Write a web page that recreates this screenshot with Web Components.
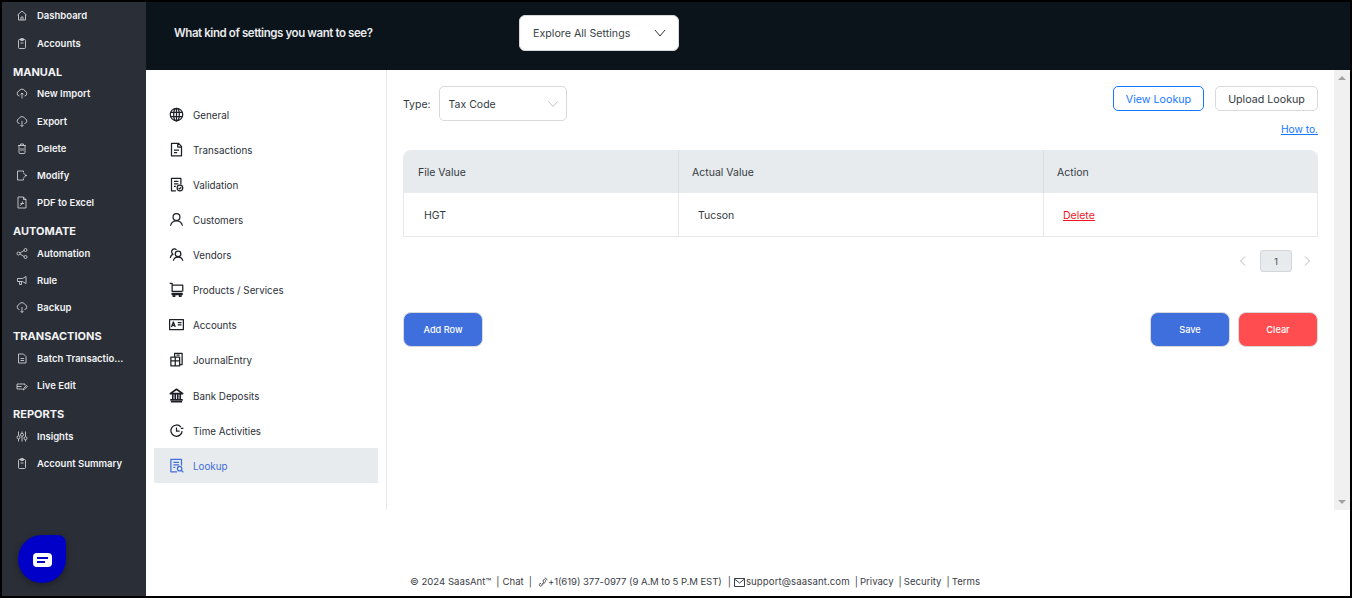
<!DOCTYPE html>
<html lang="en">
<head>
<meta charset="utf-8">
<title>Settings - Lookup</title>
<style>
html, body { margin: 0; padding: 0; background: #fff; }
body { font-family: Inter, "Liberation Sans", sans-serif; overflow: hidden; }
</style>
</head>
<body>
<app-shell>
	<app-sidebar slot="sidebar">
		<side-item icon="home">Dashboard</side-item>
		<side-item icon="clipboard" style="--top:1px">Accounts</side-item>
		<side-head>MANUAL</side-head>
		<side-item icon="upcloud">New Import</side-item>
		<side-item icon="downcloud" style="--top:1px">Export</side-item>
		<side-item icon="trash">Delete</side-item>
		<side-item icon="modify">Modify</side-item>
		<side-item icon="pdf">PDF to Excel</side-item>
		<side-head>AUTOMATE</side-head>
		<side-item icon="share" style="--top:1px">Automation</side-item>
		<side-item icon="megaphone">Rule</side-item>
		<side-item icon="downcloud">Backup</side-item>
		<side-head>TRANSACTIONS</side-head>
		<side-item icon="doc" style="--top:1px">Batch Transactio...</side-item>
		<side-item icon="liveedit">Live Edit</side-item>
		<side-head>REPORTS</side-head>
		<side-item icon="sliders" style="--top:1px">Insights</side-item>
		<side-item icon="clipboard">Account Summary</side-item>
	</app-sidebar>
	<settings-bar slot="top"></settings-bar>
	<settings-nav slot="nav">
		<nav-item icon="globe">General</nav-item>
		<nav-item icon="file">Transactions</nav-item>
		<nav-item icon="validation">Validation</nav-item>
		<nav-item icon="person">Customers</nav-item>
		<nav-item icon="people">Vendors</nav-item>
		<nav-item icon="cart">Products / Services</nav-item>
		<nav-item icon="idcard">Accounts</nav-item>
		<nav-item icon="journal">JournalEntry</nav-item>
		<nav-item icon="bank" style="--top:1px">Bank Deposits</nav-item>
		<nav-item icon="clock">Time Activities</nav-item>
		<nav-item icon="lookup" active>Lookup</nav-item>
	</settings-nav>
	<lookup-panel slot="content"></lookup-panel>
	<fake-scrollbar slot="scroll"></fake-scrollbar>
	<app-footer slot="footer"></app-footer>
	<chat-bubble slot="chat"></chat-bubble>
</app-shell>

<script>
const html = String.raw;
const css = String.raw;

// icon paths, all drawn on a 24 box
const ICONS = {
	home: `<path d="M3 11 12 3l9 8M5 10v11h14V10M10 21v-6h4v6"/>`,
	clipboard: `<rect x="5" y="4" width="14" height="18" rx="2"/><rect x="9" y="2" width="6" height="4" rx="1"/><path d="M9 11h6"/>`,
	upcloud: `<path d="M7 17a5 5 0 0 1-1-9.8 6.5 6.5 0 0 1 12 0A5 5 0 0 1 17 17"/><path d="M12 22V11M9 14l3-3 3 3"/>`,
	downcloud: `<path d="M7 16a5 5 0 0 1-1-9.8 6.5 6.5 0 0 1 12 0A5 5 0 0 1 17 16"/><path d="M12 11v11M9 19l3 3 3-3"/>`,
	trash: `<path d="M6 6v14a2 2 0 0 0 2 2h8a2 2 0 0 0 2-2V6M4 6h16M9 6V3h6v3M10 11v6M14 11v6"/>`,
	modify: `<path d="M15 6V3H3v18h12v-3M15 7l5 5-5 5"/><path d="M18 12h4"/>`,
	pdf: `<path d="M4 1h11l5 5v17H4zM15 1v5h5"/><path d="M8 18c3-1 5-4 5-8M9 14h7"/>`,
	share: `<circle cx="5" cy="12" r="3"/><circle cx="19" cy="5" r="3"/><circle cx="19" cy="19" r="3"/><path d="M8 11l8-5M8 13l8 5"/>`,
	megaphone: `<path d="M3 8h10l7-4v14l-7-4H3zM7 14v6h4v-6"/>`,
	doc: `<path d="M5 3h10l5 5v13H5zM9 12h7M9 16h7"/>`,
	liveedit: `<path d="M2 9h16v3M2 9v10h11M2 14h9M16 20l-2 1 1-3 6-6 2 2z"/>`,
	sliders: `<path d="M5 2v8M5 17v5M12 2v3M12 12v10M19 2v10M19 19v3"/><circle cx="5" cy="13.5" r="3"/><circle cx="12" cy="8.5" r="3"/><circle cx="19" cy="15.5" r="3"/>`,
	globe: `<circle cx="12" cy="12" r="10"/><ellipse cx="12" cy="12" rx="4.5" ry="10"/><path d="M12 2v20M2.5 8.5h19M2.5 15.5h19"/>`,
	file: `<path d="M4 2h11l5 5v15H4zM14 2v6h6M8 13h8M8 17h5"/>`,
	validation: `<path d="M11 22H4V2h15v10M8 7h7M8 11h7M8 15h3"/><circle cx="17.5" cy="17.5" r="4.5"/><path d="m15.5 17.5 1.5 1.5 2.5-2.5"/>`,
	person: `<circle cx="12" cy="8" r="5.5"/><path d="M2.5 22c1-5 4.500-8 9.500-8s8.500 3 9.500 8"/>`,
	people: `<circle cx="14.500" cy="11" r="4.500"/><path d="M7 22c.5-3.500 3.500-6 7.500-6s7 2.500 7.500 6M12 4.500A4.500 4.500 0 1 0 6.500 11.500C4 12.500 2.500 14.500 2 17.500"/>`,
	cart: `<path d="M1 2h4v13h16M5 5h17v10"/><path d="M5 18h16v2H5z"/><circle cx="8" cy="22" r="1.500"/><circle cx="18" cy="22" r="1.500"/>`,
	idcard: `<rect x="1" y="4" width="22" height="16"/><path d="M4 16l3-8 3 8M5 13.500h4M14 9h6M14 12.500h6"/>`,
	journal: `<path d="M9 8V2h12v18h-4M3 8h14v14H3zM3 14h14M12 5h5M10 8v14"/>`,
	bank: `<path d="M2 9 12 2l10 7zM3 22h18M2 19h20M6 10v8M10 10v8M14 10v8M18 10v8" stroke-width="2.600"/>`,
	clock: `<path d="M19 6.500A9 9 0 1 0 21 13M12 7v6h5M19 8.500h4"/>`,
	lookup: `<path d="M13 22H3V2h17v10M7 7h9M7 11h9M7 15h3"/><circle cx="17" cy="17" r="3.500"/><path d="m20 20 3 3"/>`,
};

function icon(name, size, stroke = 1.8) {
	return `<svg width="${size}" height="${size}" viewBox="0 0 24 24" fill="none" stroke="currentColor" stroke-width="${stroke}" stroke-linejoin="round">${ICONS[name] || ""}</svg>`;
}

class AppShell extends HTMLElement {
	constructor() {
		super();
		this.attachShadow({ mode: "open" });
		this.shadowRoot.innerHTML = html`
			<style>${css`
				:host {
					display: grid;
					position: relative;
					box-sizing: border-box;
					width: 1352px;
					height: 598px;
					border: 2px solid #000;
					grid-template-columns: 144px 240px 1px 947px 16px;
					grid-template-rows: 68px 440px 86px;
					background: #fff;
				}
				.side { grid-column: 1; grid-row: 1 / 4; display: grid; min-height: 0; }
				.top { grid-column: 2 / 6; grid-row: 1; display: grid; }
				.nav { grid-column: 2; grid-row: 2; display: grid; }
				.rule { grid-column: 3; grid-row: 2; background: #e6e8ea; }
				.content { grid-column: 4; grid-row: 2; display: grid; }
				.scroll { grid-column: 5; grid-row: 2; display: grid; }
				.foot { grid-column: 2 / 6; grid-row: 3; display: grid; }
			`}</style>
			<div class="side"><slot name="sidebar"></slot></div>
			<div class="top"><slot name="top"></slot></div>
			<div class="nav"><slot name="nav"></slot></div>
			<div class="rule"></div>
			<div class="content"><slot name="content"></slot></div>
			<div class="scroll"><slot name="scroll"></slot></div>
			<div class="foot"><slot name="footer"></slot></div>
			<slot name="chat"></slot>
		`;
	}
}

class AppSidebar extends HTMLElement {
	constructor() {
		super();
		this.attachShadow({ mode: "open" });
		this.shadowRoot.innerHTML = html`
			<style>${css`
				:host {
					display: flex;
					flex-direction: column;
					background: #2a2e37;
					color: #f2f3f5;
					overflow: hidden;
				}
			`}</style>
			<slot></slot>
		`;
	}
}

class SideItem extends HTMLElement {
	constructor() {
		super();
		this.attachShadow({ mode: "open" });
		this.shadowRoot.innerHTML = html`
			<style>${css`
				:host {
					display: flex;
					align-items: center;
					height: 27px;
					margin-top: var(--top, 0);
					padding-left: 14px;
					gap: 9px;
					font: 600 9.500px Inter, "Liberation Sans", sans-serif;
					white-space: nowrap;
					flex: none;
				}
				.ic { display: flex; width: 12px; justify-content: center; color: #d5d7da; margin-top: -1px; }
			`}</style>
			<span class="ic">${icon(this.getAttribute("icon"), 13, 1.7)}</span>
			<span><slot></slot></span>
		`;
	}
}

class SideHead extends HTMLElement {
	constructor() {
		super();
		this.attachShadow({ mode: "open" });
		this.shadowRoot.innerHTML = html`
			<style>${css`
				:host {
					display: flex;
					align-items: center;
					height: 16px;
					margin-top: 7px;
					padding-left: 11px;
					font: 700 11px Inter, "Liberation Sans", sans-serif;
					flex: none;
				}
			`}</style>
			<slot></slot>
		`;
	}
}

class SettingsBar extends HTMLElement {
	constructor() {
		super();
		this.attachShadow({ mode: "open" });
		this.shadowRoot.innerHTML = html`
			<style>${css`
				:host {
					display: flex;
					align-items: center;
					background: #0b141b;
					padding-left: 28px;
					padding-bottom: 6px;
					font-family: Inter, "Liberation Sans", sans-serif;
				}
				.q { width: 345px; flex: none; color: #e8eaec; font-size: 11.500px; font-weight: 600; letter-spacing: -0.42px; white-space: nowrap; }
				.pick {
					display: flex;
					align-items: center;
					justify-content: space-between;
					box-sizing: border-box;
					width: 160px;
					height: 36px;
					padding: 0 12px 0 13px;
					background: #fff;
					border: 1px solid #d9d9d9;
					border-radius: 6px;
					font-size: 10.700px;
					color: #3a3f45;
				}
				svg { display: block; }
			`}</style>
			<div class="q">What kind of settings you want to see?</div>
			<div class="pick">
				<span>Explore All Settings</span>
				<svg width="12" height="8" viewBox="0 0 12 8" fill="none" stroke="#333" stroke-width="1"><path d="M1 1l5 6 5-6"/></svg>
			</div>
		`;
	}
}

class SettingsNav extends HTMLElement {
	constructor() {
		super();
		this.attachShadow({ mode: "open" });
		this.shadowRoot.innerHTML = html`
			<style>${css`
				:host {
					display: flex;
					flex-direction: column;
					padding: 27px 8px 0;
					background: #fff;
				}
			`}</style>
			<slot></slot>
		`;
	}
}

class NavItem extends HTMLElement {
	constructor() {
		super();
		this.attachShadow({ mode: "open" });
		this.shadowRoot.innerHTML = html`
			<style>${css`
				:host {
					display: flex;
					align-items: center;
					height: 35px;
					margin-top: var(--top, 0);
					padding-left: 15px;
					gap: 9px;
					font: 400 9.800px Inter, "Liberation Sans", sans-serif;
					color: #2b3038;
					flex: none;
				}
				:host([active]) { background: #e8ebee; color: #3f6fd8; }
				span { padding-top: 2px; }
				svg { display: block; color: #1c2026; }
				:host([active]) svg { color: #3f6fd8; }
			`}</style>
			${icon(this.getAttribute("icon"), 15, 2)}
			<span><slot></slot></span>
		`;
	}
}

class AppButton extends HTMLElement {
	constructor() {
		super();
		this.attachShadow({ mode: "open" });
		this.shadowRoot.innerHTML = html`
			<style>${css`
				:host {
					display: inline-flex;
					align-items: center;
					justify-content: center;
					box-sizing: border-box;
					width: 80px;
					height: 35px;
					border: 1px solid #d9d9d9;
					border-radius: 8px;
					font: 500 9.200px Inter, "Liberation Sans", sans-serif;
					color: #fff;
				}
				:host([kind="primary"]) { background: #3e6fdd; }
				:host([kind="danger"]) { background: #ff4d50; }
				:host([kind="outline"]), :host([kind="plain"]) {
					height: 25px;
					padding-top: 2px;
					border-radius: 5px;
					background: #fff;
					font-weight: 400;
					font-size: 10.700px;
				}
				:host([kind="outline"]) { width: 91px; border-color: #1677ff; color: #1677ff; }
				:host([kind="plain"]) { width: 103px; color: #333a42; }
			`}</style>
			<slot></slot>
		`;
	}
}

class LookupTable extends HTMLElement {
	constructor() {
		super();
		this.attachShadow({ mode: "open" });
		this.shadowRoot.innerHTML = html`
			<style>${css`
				:host {
					display: grid;
					grid-template-columns: 274px 365px 1fr;
					grid-template-rows: 43px 43px;
					box-sizing: border-box;
					border-left: 1px solid #e6e8ea;
					border-right: 1px solid #e6e8ea;
					border-bottom: 1px solid #e6e8ea;
					border-radius: 8px 8px 0 0;
					overflow: hidden;
					font: 400 10.500px Inter, "Liberation Sans", sans-serif;
					color: #333a42;
				}
				div { display: flex; align-items: center; padding-top: 2px; box-sizing: border-box; }
				.h { background: #e8ebee; padding-left: 13px; border-left: 1px solid #dcdee1; }
				.c { padding-left: 19px; border-left: 1px solid #e6e8ea; }
				.h.first { border-left: 0; padding-left: 14px; }
				.c.first { border-left: 0; padding-left: 20px; }
				.del { color: #f5141e; text-decoration: underline; }
			`}</style>
			<div class="h first">File Value</div>
			<div class="h">Actual Value</div>
			<div class="h">Action</div>
			<div class="c first">HGT</div>
			<div class="c">Tucson</div>
			<div class="c"><span class="del">Delete</span></div>
		`;
	}
}

class LookupPanel extends HTMLElement {
	constructor() {
		super();
		this.attachShadow({ mode: "open" });
		this.shadowRoot.innerHTML = html`
			<style>${css`
				:host {
					display: flex;
					flex-direction: column;
					padding: 16px 16px 0;
					font: 400 10.500px Inter, "Liberation Sans", sans-serif;
					color: #333a42;
				}
				.row { display: flex; align-items: center; justify-content: space-between; }
				.type { display: flex; align-items: center; gap: 8px; padding-top: 1px; }
				.select {
					display: flex;
					align-items: center;
					justify-content: space-between;
					box-sizing: border-box;
					width: 128px;
					height: 35px;
					margin-top: -1px;
					padding: 1px 8px 0 9px;
					border: 1px solid #d9d9d9;
					border-radius: 5px;
				}
				.btns { display: flex; gap: 11px; align-self: flex-start; }
				.how { align-self: flex-end; margin-top: 2px; color: #1677ff; text-decoration: underline; font-size: 10.200px; line-height: 12px; }
				lookup-table { margin-top: 15px; }
				.pager { display: flex; align-items: center; justify-content: flex-end; margin-top: 13px; padding-right: 7px; color: #b5b8bc; }
				.page { display: flex; align-items: center; justify-content: center; width: 32px; height: 22px; margin: 0 11px 0 13px; box-sizing: border-box; background: #e8ebee; border: 1px solid #d4d6d9; border-radius: 3px; color: #444; font-size: 9px; }
				.actions { display: flex; justify-content: space-between; margin-top: 40px; }
				.right { display: flex; gap: 8px; }
				svg { display: block; }
			`}</style>
			<div class="row">
				<div class="type">
					<span>Type:</span>
					<div class="select">
						<span>Tax Code</span>
						<svg width="10" height="6" viewBox="0 0 10 6" fill="none" stroke="#bfc2c6"><path d="M.5.5 5 5.500 9.500.5"/></svg>
					</div>
				</div>
				<div class="btns">
					<app-button kind="outline">View Lookup</app-button>
					<app-button kind="plain">Upload Lookup</app-button>
				</div>
			</div>
			<span class="how">How to.</span>
			<lookup-table></lookup-table>
			<div class="pager">
				<svg width="8" height="10" viewBox="0 0 8 10" fill="none" stroke="currentColor"><path d="M6 .5 1.500 5 6 9.500"/></svg>
				<span class="page">1</span>
				<svg width="8" height="10" viewBox="0 0 8 10" fill="none" stroke="currentColor"><path d="M2 .5 6.500 5 2 9.500"/></svg>
			</div>
			<div class="actions">
				<app-button kind="primary">Add Row</app-button>
				<div class="right">
					<app-button kind="primary">Save</app-button>
					<app-button kind="danger">Clear</app-button>
				</div>
			</div>
		`;
	}
}

class FakeScrollbar extends HTMLElement {
	constructor() {
		super();
		this.attachShadow({ mode: "open" });
		this.shadowRoot.innerHTML = html`
			<style>${css`
				:host {
					display: flex;
					flex-direction: column;
					justify-content: space-between;
					align-items: center;
					padding: 6px 0;
					background: #f0f0f0;
				}
				svg { display: block; }
			`}</style>
			<svg width="8" height="4" viewBox="0 0 8 4"><path d="M4 0 8 4H0z" fill="#a3a3a3"/></svg>
			<svg width="8" height="4" viewBox="0 0 8 4"><path d="M0 0h8L4 4z" fill="#a3a3a3"/></svg>
		`;
	}
}

class AppFooter extends HTMLElement {
	constructor() {
		super();
		this.attachShadow({ mode: "open" });
		this.shadowRoot.innerHTML = html`
			<style>${css`
				:host {
					display: flex;
					align-items: flex-end;
					padding: 0 0 8px 264px;
					font: 400 9.600px Inter, "Liberation Sans", sans-serif;
					line-height: 12px;
					color: #3b4047;
					white-space: nowrap;
				}
				svg { display: block; flex: none; margin-bottom: 1px; }
			`}</style>
			<span>© 2024 SaasAnt™</span>
			<span style="margin-left:5px">|</span>
			<span style="margin-left:3px">Chat</span>
			<span style="margin-left:5px">|</span>
			<svg style="margin-left:6px" width="10" height="10" viewBox="0 0 24 24" fill="none" stroke="currentColor" stroke-width="2"><path d="M5 15c-3 3-2 6 0 7 3 0 5-2 8-5s5-6 5-9c-1-2-3-3-5-1l-1 3 2 2-5 6-2-2z"/><path d="M16 2a7 7 0 0 1 6 6"/></svg>
			<span style="letter-spacing:-.09px">+1(619) 377-0977 (9 A.M to 5 P.M EST)</span>
			<span style="margin-left:6px">|</span>
			<svg style="margin-left:3px" width="11" height="9" viewBox="0 0 22 18" fill="none" stroke="currentColor" stroke-width="2"><path d="M1 1h20v16H1zM1 2l10 8 10-8"/></svg>
			<span style="margin-left:1px;letter-spacing:.1px">support@saasant.com</span>
			<span style="margin-left:5px">|</span>
			<span style="margin-left:2px">Privacy</span>
			<span style="margin-left:5px">|</span>
			<span style="margin-left:2px">Security</span>
			<span style="margin-left:5px">|</span>
			<span style="margin-left:2px">Terms</span>
		`;
	}
}

class ChatBubble extends HTMLElement {
	constructor() {
		super();
		this.attachShadow({ mode: "open" });
		this.shadowRoot.innerHTML = html`
			<style>${css`
				:host {
					position: absolute;
					left: 16px;
					top: 533px;
					width: 48px;
					height: 48px;
					display: flex;
					align-items: center;
					justify-content: center;
					background: #0000c8;
					border-radius: 50% 8px 50% 50%;
					box-shadow: 0 2px 6px rgba(0, 0, 0, .35);
				}
				svg { display: block; margin: 2px 0 0 1px; }
			`}</style>
			<svg width="19" height="14" viewBox="0 0 19 14"><rect width="19" height="14" rx="4" fill="#fff"/><path d="M4 4h11v2H4zM4 8h8v2H4z" fill="#0000c8"/></svg>
		`;
	}
}

customElements.define("app-shell", AppShell);
customElements.define("app-sidebar", AppSidebar);
customElements.define("side-item", SideItem);
customElements.define("side-head", SideHead);
customElements.define("settings-bar", SettingsBar);
customElements.define("settings-nav", SettingsNav);
customElements.define("nav-item", NavItem);
customElements.define("app-button", AppButton);
customElements.define("lookup-table", LookupTable);
customElements.define("lookup-panel", LookupPanel);
customElements.define("fake-scrollbar", FakeScrollbar);
customElements.define("app-footer", AppFooter);
customElements.define("chat-bubble", ChatBubble);
</script>
</body>
</html>
